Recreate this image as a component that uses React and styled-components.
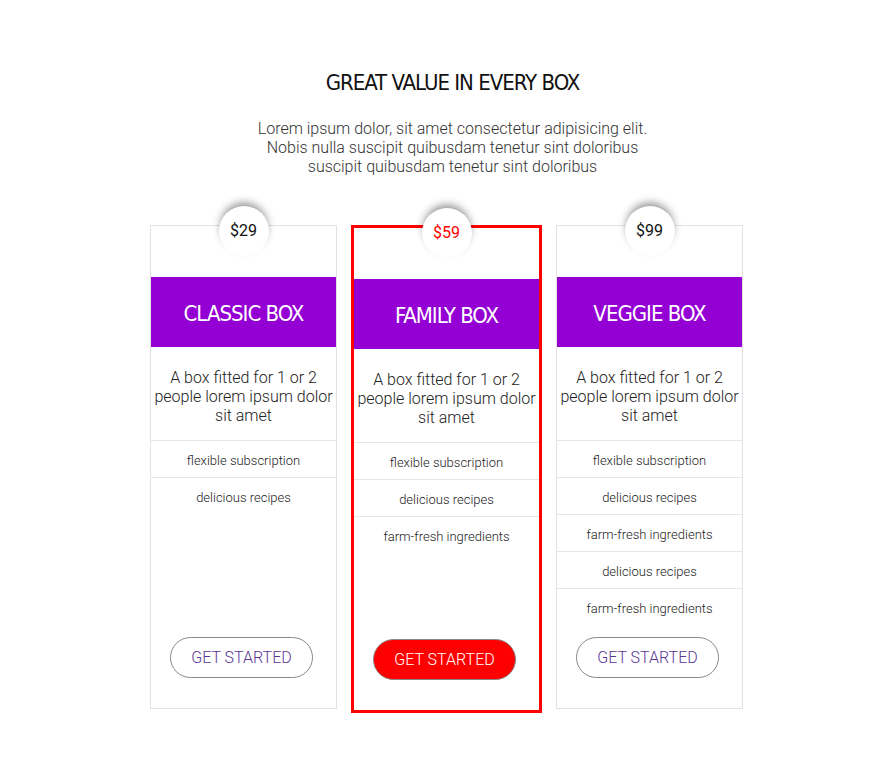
import React from 'react'
import styled, { createGlobalStyle } from 'styled-components'

const GlobalStyle = createGlobalStyle`
  body {
    margin: 0;
    background: #fff;
    font-family: Roboto, "Liberation Sans", sans-serif;
    color: #333;
  }
`

const plans = [
  {
    price: '$29',
    name: 'CLASSIC BOX',
    features: ['flexible subscription', 'delicious recipes'],
  },
  {
    price: '$59',
    name: 'FAMILY BOX',
    featured: true,
    features: ['flexible subscription', 'delicious recipes', 'farm-fresh ingredients'],
  },
  {
    price: '$99',
    name: 'VEGGIE BOX',
    features: [
      'flexible subscription',
      'delicious recipes',
      'farm-fresh ingredients',
      'delicious recipes',
      'farm-fresh ingredients',
    ],
  },
]

export default function App() {
  return (
    <>
      <GlobalStyle />
      <Section>
        <Title>GREAT VALUE IN EVERY BOX</Title>
        <Intro>
          Lorem ipsum dolor, sit amet consectetur adipisicing elit.
          <br />
          Nobis nulla suscipit quibusdam tenetur sint doloribus
          <br />
          suscipit quibusdam tenetur sint doloribus
        </Intro>
        <Cards>
          {plans.map((p) => (
            <Card key={p.name} $featured={p.featured}>
              <Price $featured={p.featured}>{p.price}</Price>
              <Header>
                <BoxName>{p.name}</BoxName>
              </Header>
              <Description>A box fitted for 1 or 2 people lorem ipsum dolor sit amet</Description>
              <Features>
                {p.features.map((f, i) => (
                  <Feature key={i}>{f}</Feature>
                ))}
              </Features>
              <Button $featured={p.featured}>GET STARTED</Button>
            </Card>
          ))}
        </Cards>
      </Section>
    </>
  )
}

const Section = styled.section`
  width: 593px;
  margin-left: 150px;
  padding-top: 67px;
  display: flex;
  flex-direction: column;
  align-items: center;
`

const Title = styled.h1`
  margin: 0;
  font-family: "DejaVu Sans Condensed", sans-serif;
  font-weight: 400;
  font-size: 22px;
  letter-spacing: -1px;
  line-height: 32px;
  color: #111;
  transform: translateX(6px);
`

const Intro = styled.p`
  margin: 20px 0 0;
  font-weight: 300;
  font-size: 16px;
  line-height: 19px;
  text-align: center;
  color: #333;
  transform: translateX(6px);
`

const Cards = styled.div`
  margin-top: 49px;
  width: 100%;
  display: flex;
  align-items: flex-start;
  gap: 14px;
`

const Card = styled.div`
  position: relative;
  box-sizing: content-box;
  width: 185px;
  flex: none;
  height: 482px;
  display: flex;
  flex-direction: column;
  border: ${(p) => (p.$featured ? '3px solid #ff0000' : '1px solid #e2e2e2')};
  background: #fff;
`

const Price = styled.div`
  position: absolute;
  top: -20px;
  left: 50%;
  transform: translateX(-50%);
  width: 50px;
  height: 50px;
  border-radius: 50%;
  background: #fff;
  box-shadow: 0 -5px 8px -2px rgba(0, 0, 0, 0.45);
  display: flex;
  align-items: center;
  justify-content: center;
  padding-bottom: 2px;
  box-sizing: border-box;
  font-family: Roboto, sans-serif;
  font-size: 16px;
  font-weight: 400;
  color: ${(p) => (p.$featured ? '#ff0000' : '#111')};
`

const Header = styled.div`
  margin-top: 51px;
  height: 70px;
  padding-top: 3px;
  box-sizing: border-box;
  background: #9400d3;
  display: flex;
  align-items: center;
  justify-content: center;
`

const BoxName = styled.h2`
  margin: 0;
  font-family: "DejaVu Sans Condensed", sans-serif;
  font-weight: 400;
  font-size: 22px;
  letter-spacing: -1px;
  color: #fff;
`

const Description = styled.p`
  margin: 0;
  padding: 21px 2px 15px;
  font-weight: 300;
  font-size: 16px;
  line-height: 19px;
  text-align: center;
  color: #222;
`

const Features = styled.ul`
  list-style: none;
  margin: 0;
  padding: 0;
`

const Feature = styled.li`
  height: 37px;
  border-top: 1px solid #e6e6e6;
  box-sizing: border-box;
  display: flex;
  align-items: center;
  justify-content: center;
  padding-top: 2px;
  font-size: 13px;
  font-weight: 300;
  color: #222;
`

const Button = styled.button`
  align-self: center;
  margin: auto 4px 30px 0;
  width: 143px;
  height: 41px;
  border-radius: 21px;
  border: 1px solid #888;
  background: ${(p) => (p.$featured ? '#ff0000' : '#fff')};
  color: ${(p) => (p.$featured ? '#fff' : '#5b3596')};
  font-family: Roboto, sans-serif;
  font-weight: 300;
  font-size: 16px;
  cursor: pointer;
`
